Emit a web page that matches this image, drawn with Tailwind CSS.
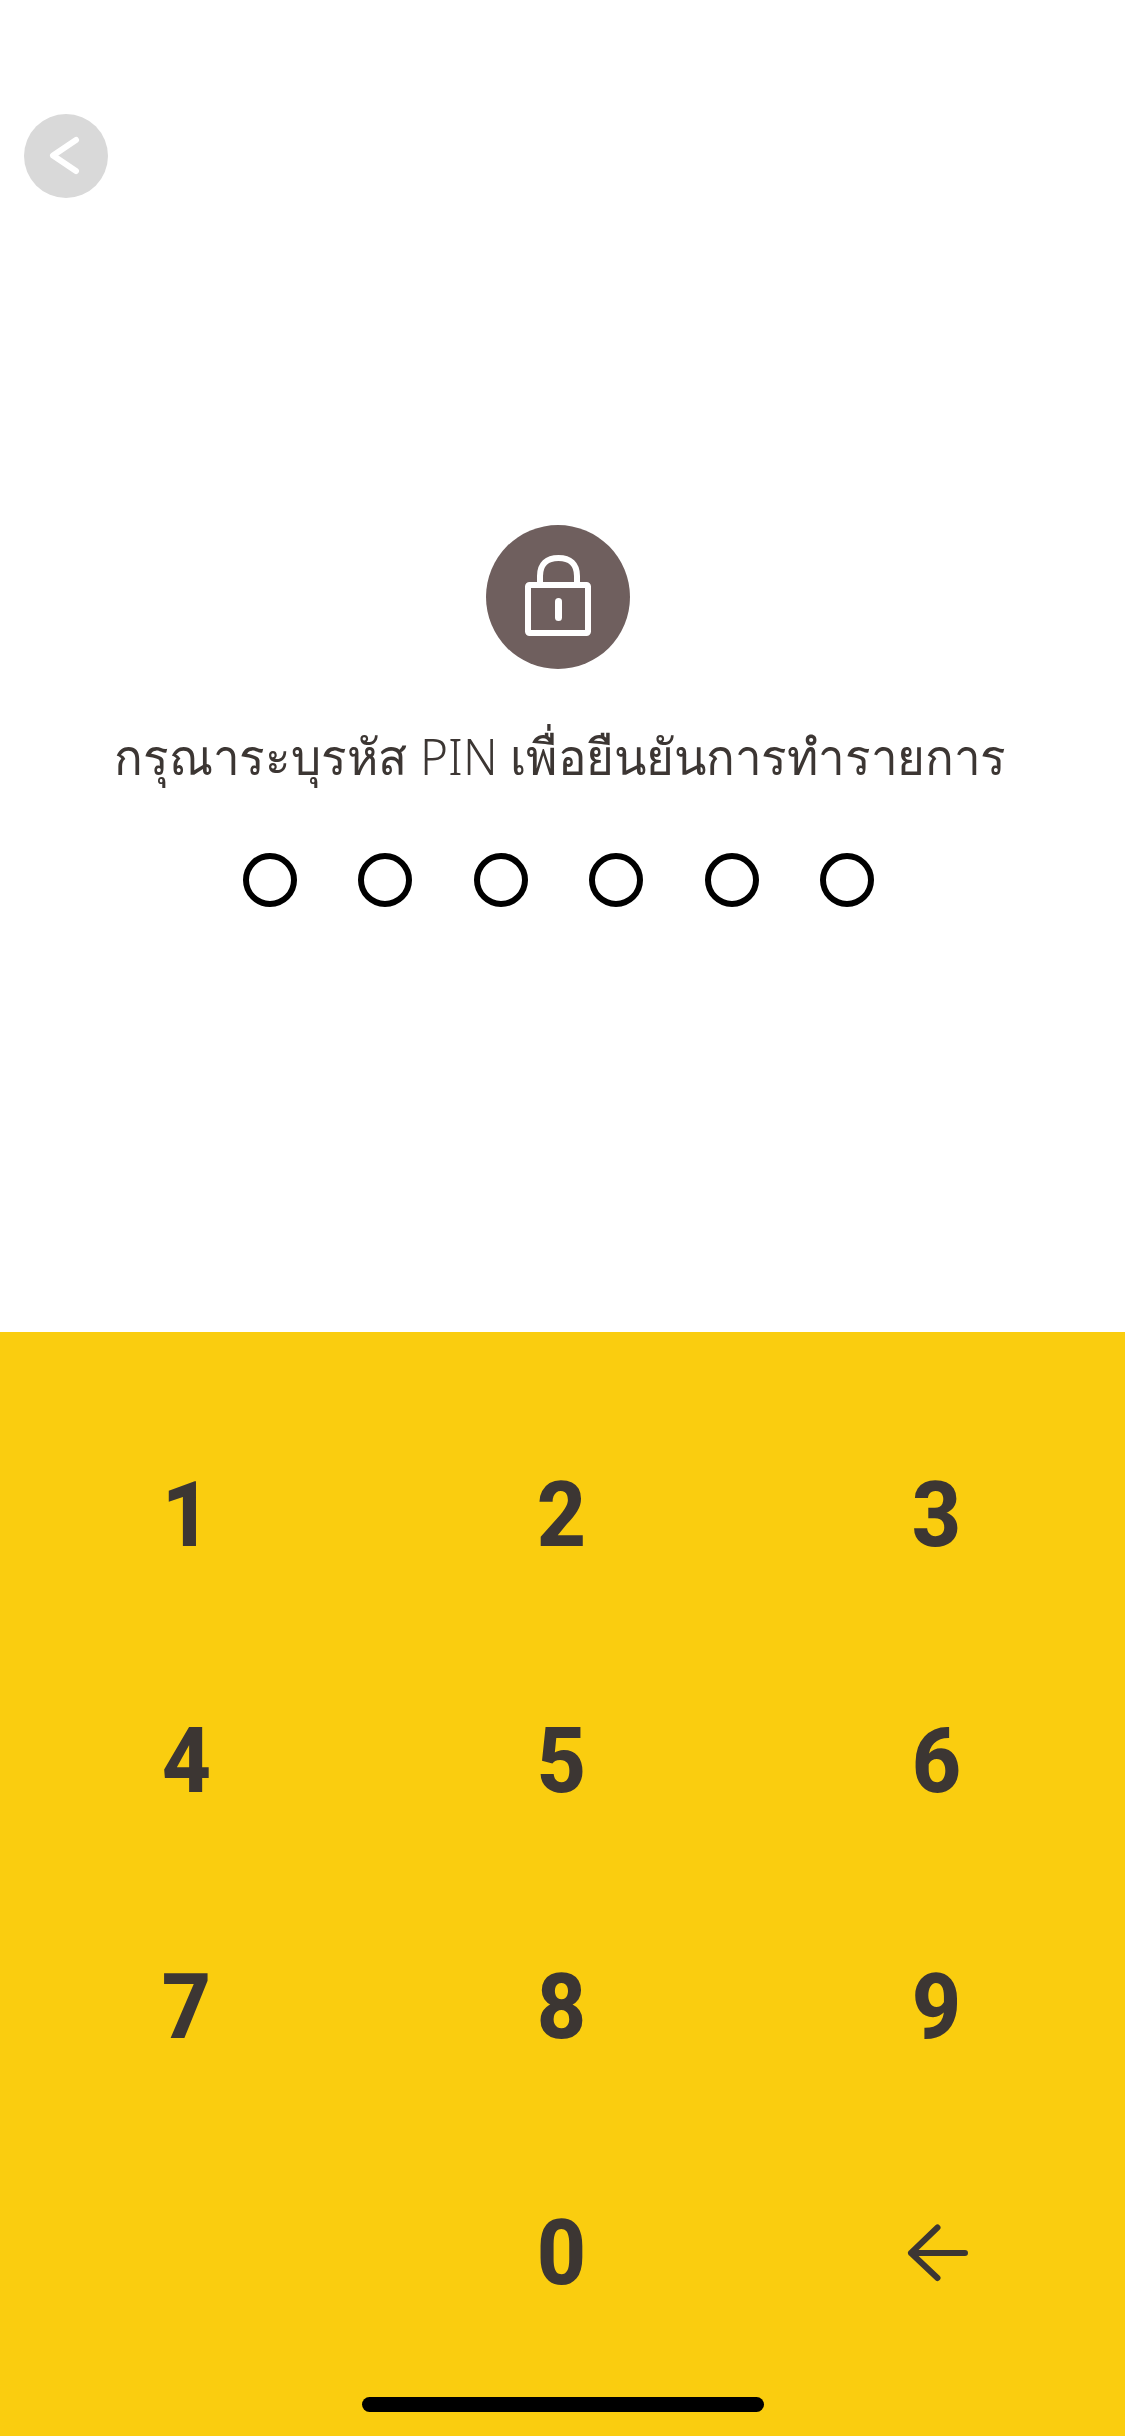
<!DOCTYPE html>
<html lang="th">
<head>
  <meta charset="UTF-8" />
  <meta name="viewport" content="width=device-width, initial-scale=1.0" />
  <title>PIN</title>
  <script src="https://cdn.jsdelivr.net/npm/@tailwindcss/browser@4"></script>
</head>
<body class="bg-white font-['Noto_Sans','Open_Sans',sans-serif]">
  <div class="w-[1125px] h-[2436px] flex flex-col overflow-hidden">
    <!-- PIN prompt -->
    <div class="h-[1332px] flex flex-col">
      <button class="ml-6 mt-[114px] w-[84px] h-[84px] rounded-full bg-[#d9d9d9] flex items-center justify-center">
        <svg width="84" height="84" viewBox="0 0 84 84" fill="none" stroke="white" stroke-width="6" stroke-linecap="round" stroke-linejoin="round"><path d="M52 26 L29 41.5 L52 57"/></svg>
      </button>

      <div class="mt-[327px] flex flex-col items-center">
        <div class="w-[144px] h-[144px] rounded-full bg-[#6f5f5e] flex items-center justify-center ml-[-9px]">
          <svg width="144" height="144" viewBox="0 0 144 144" fill="none" stroke="white" stroke-width="6">
            <rect x="42" y="60" width="60" height="48" rx="1.5"/>
            <path d="M54 59 V51 C54 39 61 33 72.5 33 C84 33 91 39 91 51 V59"/>
            <path d="M72.5 76.5 V92.5" stroke-width="7" stroke-linecap="round"/>
          </svg>
        </div>
        <p class="mt-[47px] text-[50px] leading-[80px] font-light text-[#3c3633] whitespace-nowrap ml-[-5px] scale-x-[0.952]">กรุณาระบุรหัส PIN เพื่อยืนยันการทำรายการ</p>
        <div class="mt-[57px] flex gap-[61.4px] ml-[-8px]">
          <div class="w-[54px] h-[54px] rounded-full border-[6px] border-black"></div>
          <div class="w-[54px] h-[54px] rounded-full border-[6px] border-black"></div>
          <div class="w-[54px] h-[54px] rounded-full border-[6px] border-black"></div>
          <div class="w-[54px] h-[54px] rounded-full border-[6px] border-black"></div>
          <div class="w-[54px] h-[54px] rounded-full border-[6px] border-black"></div>
          <div class="w-[54px] h-[54px] rounded-full border-[6px] border-black"></div>
        </div>
      </div>
    </div>

    <!-- Keypad -->
    <div class="flex-1 bg-[#facd0f] flex flex-col items-center">
      <div class="mt-[60px] w-[1125px] grid grid-cols-3 auto-rows-[246px] text-[91px] font-extrabold font-['Roboto',sans-serif] text-[#3c3633] -ml-[3px]">
        <div class="flex items-center justify-center scale-x-[0.94]">1</div>
        <div class="flex items-center justify-center scale-x-[0.94]">2</div>
        <div class="flex items-center justify-center scale-x-[0.94]">3</div>
        <div class="flex items-center justify-center scale-x-[0.94]">4</div>
        <div class="flex items-center justify-center scale-x-[0.94]">5</div>
        <div class="flex items-center justify-center scale-x-[0.94]">6</div>
        <div class="flex items-center justify-center scale-x-[0.94]">7</div>
        <div class="flex items-center justify-center scale-x-[0.94]">8</div>
        <div class="flex items-center justify-center scale-x-[0.94]">9</div>
        <div></div>
        <div class="flex items-center justify-center scale-x-[0.94]">0</div>
        <div class="flex items-center justify-center">
          <svg width="66" height="60" viewBox="0 0 66 60" fill="none" stroke="#3c3633" stroke-width="6" stroke-linecap="round" stroke-linejoin="round"><path d="M62 30 H8 M34.5 4.5 L8 30 L34.5 55"/></svg>
        </div>
      </div>
      <div class="mt-[21px] w-[402px] h-[15px] rounded-full bg-black"></div>
    </div>
  </div>
</body>
</html>
